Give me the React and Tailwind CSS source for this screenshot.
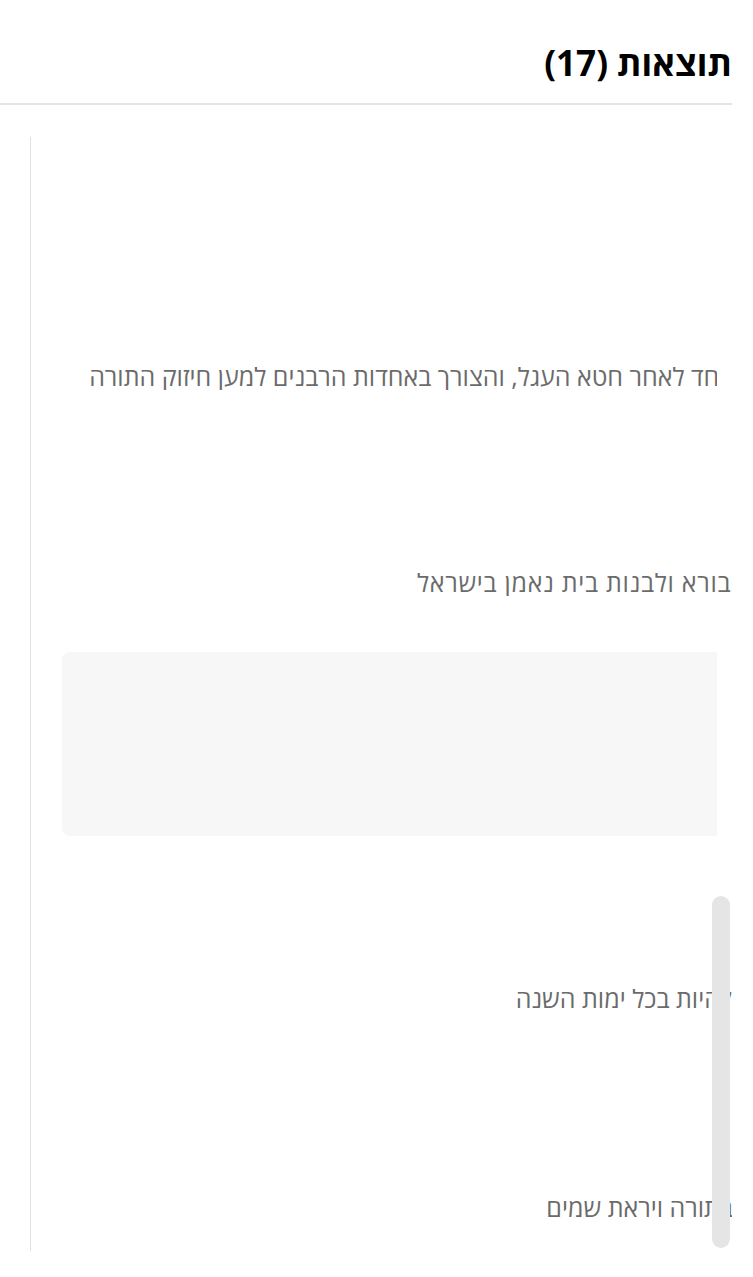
export default function App() {
  const body = { fontFamily: '"Open Sans", "Noto Sans", sans-serif' };
  return (
    <div dir="rtl" className="relative w-[753px] h-[1277px] overflow-hidden bg-white" style={body}>
      <div className="w-[732px] ml-0 mr-auto">
        <div className="h-[105px] border-b-2 border-[#e5e5e5] flex items-center justify-start pt-[22px]">
          <h1 className="text-[35px] font-bold text-black leading-none">תוצאות (17)</h1>
        </div>
        <div className="mt-[32px] ml-[30px] h-[1114px] border-l border-[#e0e0e0] overflow-hidden text-[25px] text-[#6b6b6b] leading-[28px]">
          <div className="h-[225px]" />
          <div className="mr-[15px] overflow-hidden whitespace-nowrap">
            <span className="inline-block -mr-[17px]">אחד לאחר חטא העגל, והצורך באחדות הרבנים למען חיזוק התורה</span>
          </div>
          <div className="h-[178px]" />
          <div className="overflow-hidden whitespace-nowrap">
            <span className="inline-block -mr-[13px] tracking-[0.7px]">בבורא ולבנות בית נאמן בישראל</span>
          </div>
          <div className="h-[56px]" />
          <div className="ml-[31px] mr-[15px] h-[184px] rounded-l-lg bg-[#f7f7f7]" />
          <div className="h-[148px]" />
          <div className="overflow-hidden whitespace-nowrap">
            <span className="inline-block mr-0">להיות בכל ימות השנה</span>
          </div>
          <div className="h-[181px]" />
          <div className="overflow-hidden whitespace-nowrap">
            <span className="inline-block -mr-[1px]">בתורה ויראת שמים</span>
          </div>
        </div>
      </div>
      <div className="absolute left-[712px] top-[896px] w-[18px] h-[352px] rounded-full bg-[#e5e5e5]" />
    </div>
  );
}
